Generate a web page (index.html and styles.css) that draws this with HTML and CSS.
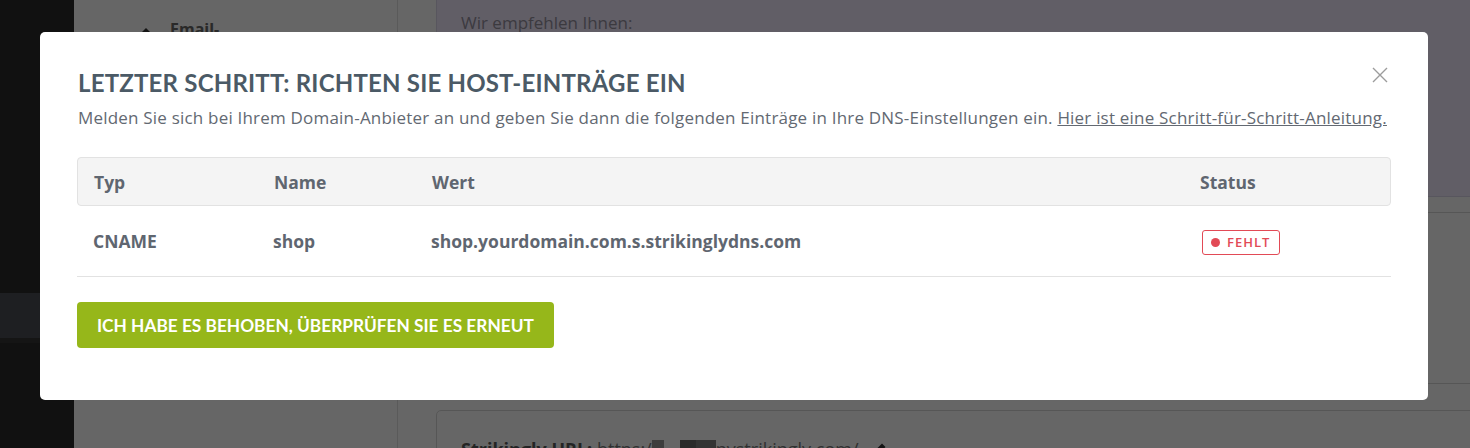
FILE: index.html
```html
<!DOCTYPE html>
<html lang="de">
<head>
    <meta charset="UTF-8">
    <meta name="viewport" content="width=device-width, initial-scale=1.0">
    <title>Domain verbinden</title>
    <link rel="stylesheet" href="styles.css">
</head>
<body>
    <div class="page">
        <div class="sidebar">
            <div class="side-space"></div>
            <div class="side-item"></div>
        </div>
        <div class="menu">
            <div class="menu-item">
                <span class="caret"></span>
                <span class="menu-label">Email-<br>Adressen</span>
            </div>
        </div>
        <div class="content">
            <div class="card card-tip">
                <p>Wir empfehlen Ihnen:</p>
            </div>
            <div class="card card-mid"></div>
            <div class="card card-url">
                <p><b>Strikingly URL:</b> https:/<span class="blur b1"></span><span class="blur b2"></span><span class="blur b3"></span>nystrikingly.com/
                    <svg class="pencil" width="16" height="16" viewBox="0 0 16 16"><path d="M11 1.5l3.5 3.5-8.5 8.5H2.5V10z" fill="currentColor"/></svg>
                </p>
            </div>
        </div>
    </div>

    <div class="overlay"></div>

    <div class="modal">
        <button class="close" aria-label="Schließen">
            <svg width="16" height="16" viewBox="0 0 16 16"><path d="M1 1l14 14M15 1L1 15" stroke="currentColor" stroke-width="1.4" fill="none"/></svg>
        </button>
        <h2 class="modal-title">Letzter Schritt: Richten Sie Host-Einträge ein</h2>
        <p class="modal-text">Melden Sie sich bei Ihrem Domain-Anbieter an und geben Sie dann die folgenden Einträge in Ihre DNS-Einstellungen ein. <a href="#">Hier ist eine Schritt-für-Schritt-Anleitung.</a></p>

        <div class="records">
            <div class="rec-row rec-head">
                <div>Typ</div>
                <div>Name</div>
                <div>Wert</div>
                <div>Status</div>
            </div>
            <div class="rec-row rec-body">
                <div>CNAME</div>
                <div>shop</div>
                <div>shop.yourdomain.com.s.strikinglydns.com</div>
                <div><span class="badge"><span class="dot"></span>FEHLT</span></div>
            </div>
        </div>

        <button class="recheck">Ich habe es behoben, überprüfen Sie es erneut</button>
    </div>
</body>
</html>
```

FILE: styles.css
```css
* {
    margin: 0;
    padding: 0;
    box-sizing: border-box;
}
body {
    width: 1470px;
    height: 448px;
    overflow: hidden;
    font-family: "Open Sans", "Liberation Sans", sans-serif;
    background: #fff;
}

/* page behind the modal */
.page {
    display: grid;
    grid-template-columns: 74px 324px 1fr;
    height: 448px;
}
.sidebar {
    background: #2b2b2b;
}
.side-space {
    height: 293px;
}
.side-item {
    height: 50px;
    background: #4c4f56;
    border-bottom: 5px solid #353535;
}
.menu {
    background: #fff;
    border-right: 1px solid #e0e0e0;
}
.menu-item {
    display: flex;
    gap: 19px;
    padding: 19px 0 0 67px;
}
.caret {
    width: 0;
    height: 0;
    margin-top: 9px;
    border-left: 5px solid transparent;
    border-right: 5px solid transparent;
    border-bottom: 5px solid #333;
}
.menu-label {
    font-weight: 700;
    font-size: 16px;
    line-height: 20px;
    color: #666;
}
.content {
    padding-left: 38px;
    overflow: hidden;
}
.card {
    width: 1100px;
    border: 1px solid #d8d8d8;
    border-radius: 5px;
}
.card-tip {
    height: 207px;
    margin-top: -10px;
    background: #f2ebff;
    border-color: #ddd6ea;
    padding: 20px 24px;
    font-size: 17px;
    color: #96919f;
}
.card-mid {
    height: 172px;
    margin-top: 15px;
}
.card-url {
    height: 80px;
    margin-top: 26px;
    padding: 26px 24px;
    font-size: 18px;
    color: #7a7a7a;
}
.card-url b {
    color: #5a5a5a;
}
.blur {
    display: inline-block;
    height: 20px;
    vertical-align: -4px;
    background: #9a9a9a;
}
.b1 { width: 12px; }
.b2 { width: 16px; margin-left: 16px; background: #6a6a6a; }
.b3 { width: 20px; background: #808080; }
.pencil {
    color: #333;
    vertical-align: -2px;
    margin-left: 8px;
}
.overlay {
    position: fixed;
    inset: 0;
    background: rgba(0, 0, 0, 0.6);
}

/* modal */
.modal {
    position: fixed;
    left: 40px;
    top: 32px;
    width: 1388px;
    height: 368px;
    background: #fff;
    border-radius: 5px;
    padding: 36px 37px 0 37px;
}
.close {
    position: absolute;
    right: 40px;
    top: 35px;
    border: none;
    background: none;
    color: #9c9c9c;
    cursor: pointer;
}
.modal-title {
    font-family: Lato, "Open Sans", sans-serif;
    font-weight: 700;
    font-size: 24px;
    line-height: 30px;
    letter-spacing: 0.2px;
    text-transform: uppercase;
    color: #4b5a66;
    padding-left: 1px;
}
.modal-text {
    margin-top: 8px;
    font-size: 17px;
    line-height: 24px;
    letter-spacing: 0.2px;
    white-space: nowrap;
    color: #636972;
    padding-left: 1px;
}
.modal-text a {
    color: #636972;
}
.records {
    margin-top: 27px;
    border-bottom: 1px solid #e2e2e2;
}
.rec-row {
    display: grid;
    grid-template-columns: 180px 158px 1fr 190px;
    align-items: center;
    padding-left: 16px;
    font-weight: 700;
    font-size: 17.5px;
    color: #5f6670;
}
.rec-head {
    height: 49px;
    background: #f4f4f4;
    border: 1px solid #e2e2e2;
    border-radius: 4px;
}
.rec-body {
    height: 70px;
}
.badge {
    display: inline-flex;
    align-items: center;
    gap: 7px;
    height: 25px;
    padding: 0 9px 0 8px;
    border: 1px solid #e24a56;
    border-radius: 3px;
    font-size: 13px;
    font-weight: 600;
    letter-spacing: 1px;
    color: #e24a56;
    margin-left: 1px;
}
.dot {
    width: 9px;
    height: 9px;
    border-radius: 50%;
    background: #e24a56;
}
.recheck {
    margin-top: 25px;
    height: 46px;
    padding: 0 20px;
    border: none;
    border-radius: 4px;
    background: #96b71a;
    color: #fff;
    font-family: Lato, "Open Sans", sans-serif;
    font-weight: 700;
    font-size: 17.3px;
    text-transform: uppercase;
    cursor: pointer;
}
```
